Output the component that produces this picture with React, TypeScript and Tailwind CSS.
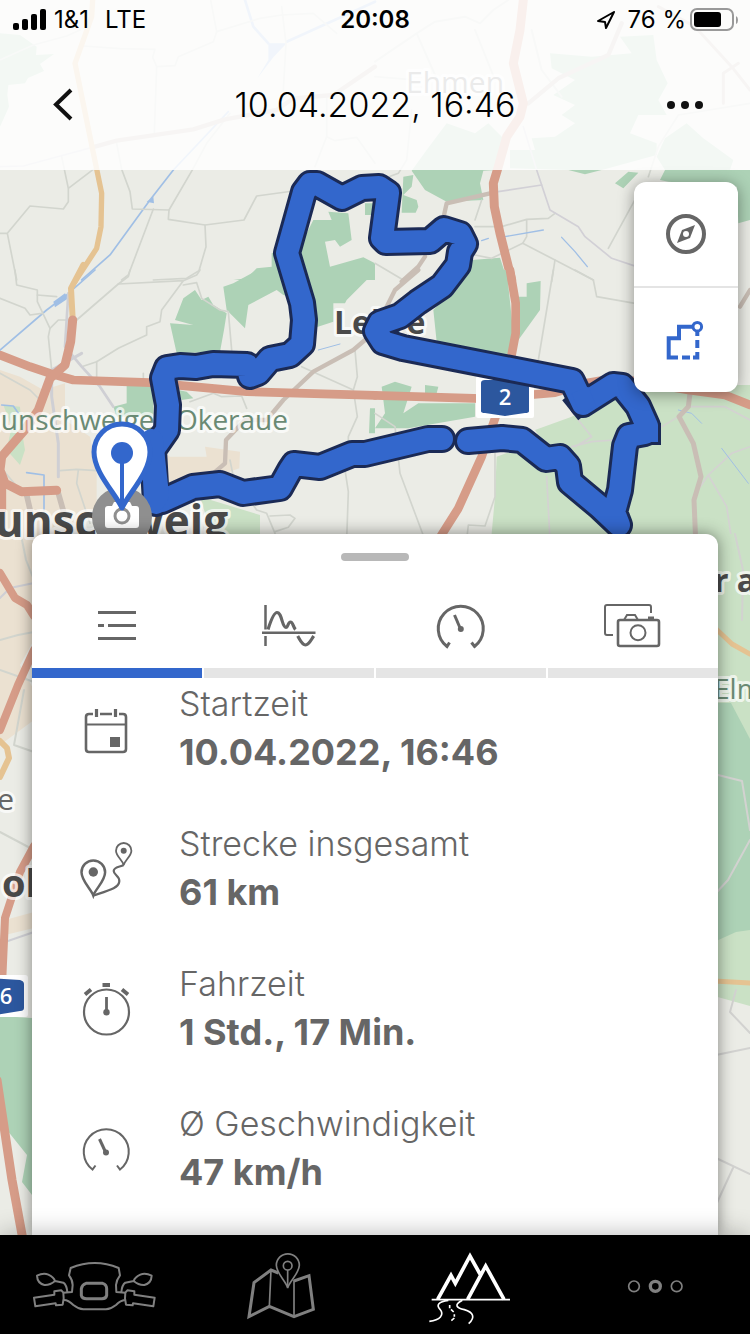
import type { ReactNode } from "react";

const FOREST = "#add2b6";
const MEADOW = "#cae1c5";
const TOWN = "#ebe1d1";
const HIGHWAY = "#d69c88";
const MAIN_ROAD = "#e5c392";
const SIDE_ROAD = "#c9beb5";
const LANE = "#d2d5ce";
const WATER = "#a0bfe5";

const ROUTE =
  "M156 503 L153 450 L167 430 L168 405 L163 378 L167 368 L180 366 L196 367 L213 364 L247 365 L250 376 L258 373 L270 359 L290 355 L302 344 L304 320 L302 303 L287 253 L304 192 L310 184 L317 184 L342 198 L362 188 L379 187 L388 193 L382 238 L386 242 L430 241 L444 229 L460 234 L465 244 L460 252 L458 265 L442 286 L418 302 L400 316 L380 323 L376 331 L383 342 L403 348 L572 381 L583 404 L613 385 L622 386 L638 406 L647 426 L645 433 L629 436 L625 446 L620 490 L614 512 L619 525 L600 507 L570 482 L568 466 L560 457 L546 459 L522 440 L502 438 L468 441";
const ROUTE_BACK =
  "M442 439 L428 439 L365 454 L352 454 L320 467 L294 464 L290 470 L280 488 L243 493 L220 484 L193 487 L162 501";

// Tiles are drawn at three units per screen pixel.
function Tile({ x, y, children }: { x: number; y: number; children: ReactNode }) {
  return (
    <g transform={`translate(${x} ${y}) scale(0.33333)`}>{children}</g>
  );
}

function Road({ d, color = LANE, width = 5 }: { d: string; color?: string; width?: number }) {
  return (
    <path
      d={d}
      fill="none"
      stroke={color}
      strokeWidth={width}
      strokeLinecap="round"
      strokeLinejoin="round"
    />
  );
}

function Label({
  x,
  y,
  className,
  end,
  children,
}: {
  x: number;
  y: number;
  className: string;
  end?: boolean;
  children: string;
}) {
  return (
    <text
      x={x}
      y={y}
      textAnchor={end ? "end" : "start"}
      stroke="#ffffff"
      strokeOpacity="0.7"
      strokeWidth="6"
      strokeLinejoin="round"
      paintOrder="stroke"
      className={`font-['Open_Sans',sans-serif] ${className}`}
    >
      {children}
    </text>
  );
}

function MapBackground() {
  return (
    <svg
      className="absolute inset-0 h-full w-full"
      viewBox="0 0 750 1334"
      preserveAspectRatio="xMidYMin slice"
      aria-hidden="true"
    >
      <rect width="750" height="1334" fill="#ebece6" />

      <Tile x={0} y={0}>
        <path
          fill={FOREST}
          d="M0 100 60 105 110 140 108 165 162 162 120 192 132 213 84 234 75 250 25 255 22 285 27 320 0 380Z"
        />
        <path
          fill={FOREST}
          d="M700 840 740 835 770 805 815 800 815 760 910 720 940 660 995 660 985 635 1045 640 1055 720 1020 740 1005 720 975 725 990 800 1090 772 1125 790V840Z M1095 610H1125V645H1095Z"
        />
        <path fill={WATER} d="M805 130H860L820 172 772 235 805 180Z M440 605 460 590 462 610Z" />
        <Road d="M735 0 760 80 805 130 M860 125 1125 5" color={WATER} width={8} />
        <Road d="M685 335 520 510 450 600 330 765 245 840" color={WATER} />
        <Road d="M0 700H22L90 618 190 627 205 605V565L280 508 M205 565 185 470 M22 700 50 840" />
        <Road d="M350 430 365 508 390 575 397 627 507 630 505 658 615 675 732 660 770 588 880 573" />
        <Road d="M690 340 620 430 578 508 507 630 M460 627 385 825 365 840 M615 675 618 740 597 812 560 835 460 840" />
        <Road d="M250 138 360 146 465 148 458 172 470 200 525 197 535 170 640 125 650 95 632 0 M470 200 463 400" />
        <Road d="M650 95 780 55 845 45 940 40 1010 100 M845 20 858 130 850 270" />
        <Road d="M0 180 100 135 200 108 240 90" />
        <Road d="M980 290V410L1005 422 1070 412 1125 490 M980 410 945 500" />
        <Road d="M0 500 70 498 285 440" color="#d2d3da" />
        <Road
          d="M285 440 350 422 580 388 675 358 830 330 880 295 1000 285 1125 200"
          color={SIDE_ROAD}
          width={13}
        />
        <Road
          d="M278 0 275 50 225 190 270 410 305 580 303 680 290 745 225 845"
          color={MAIN_ROAD}
          width={16}
        />
      </Tile>

      <Tile x={375} y={0}>
        <path
          fill={FOREST}
          d="M735 110 835 105 845 180 878 250 850 300 875 345H790L765 400 845 430V465L700 505 630 523 580 510 405 505V450H480L470 415 540 410 600 370 560 345 600 315 535 285 600 240 530 205 525 160 650 170 770 160Z"
        />
        <path
          fill={FOREST}
          d="M155 450 215 370 300 400 340 370 390 420 365 510 325 512 315 550 325 600 215 605 150 570 110 512Z"
        />
        <path fill={FOREST} d="M85 530 115 525 110 560 85 585 125 600 130 620 122 638H80Z" />
        <path
          fill={FOREST}
          d="M870 415 935 370 985 415 1075 480 1065 510H1125V660L1090 670 1085 560 880 545 855 540 870 510 845 470Z M720 550 760 515 790 518 745 565Z"
        />
        <path fill={FOREST} d="M290 780 375 773 400 850H200Z" />
        <Road
          d="M0 185 125 100 180 65 270 50 315 70 355 30 400 0 M125 100 200 270 M300 90 360 240 M470 90 500 210 560 290"
          width={6}
        />
        <Road d="M0 230 100 238 M110 330 95 480 70 520 30 535 M1125 310 910 345 850 440 820 530" />
        <Road d="M850 20 960 80 1070 200 1125 270 M1045 310V220L1090 190" color={SIDE_ROAD} width={9} />
        <Road d="M300 680 380 680 455 658 520 655 540 640 M455 658V710L443 730 540 780 655 840" />
        <Road d="M443 730 350 775 300 765 M540 780 530 845 M320 600 300 660 M700 745 785 590" />
        <Road d="M0 790 85 840" />
        <Road d="M370 575 500 555 485 510 445 380" color="#d2d0d6" />
        <Road d="M500 555 525 630 610 680 630 710 710 775 785 800" color="#d2d0d6" />
        <Road d="M205 655 215 610 345 580 M460 310 550 235 700 165 740 70" color={SIDE_ROAD} width={13} />
        <Road d="M150 770 130 800 80 845" color={SIDE_ROAD} width={13} />
        <Road d="M320 722 340 715 M390 710 505 690 M560 712 600 755 637 800" color={WATER} width={4} />
        <Road
          d="M445 0 435 90 415 190 445 310 435 350 395 410 370 500 355 550 358 620 375 700 410 840"
          color={HIGHWAY}
          width={27}
        />
      </Tile>

      <Tile x={0} y={270}>
        <path
          fill={TOWN}
          d="M0 300 60 320 130 360 195 340V450L270 500 290 600V720L200 810H0Z M480 540 510 560 620 560 615 530 720 545 718 595 660 615 500 645Z"
        />
        <path
          fill={MEADOW}
          d="M10 405 60 410 65 480 75 540 60 585 20 540 35 470Z M600 680 780 735V810H640Z"
        />
        <path
          fill={FOREST}
          d="M670 50 700 40 755 10 770 0H860L870 80 850 75 830 60 745 105 735 175 680 120Z"
        />
        <path
          fill={FOREST}
          d="M905 0H1120L1100 30 1040 90 1035 100H1000V155L940 175Z M550 85 585 60 605 90 625 80 640 105 680 130 672 180 660 245 530 250 510 160 580 165 525 150Z"
        />
        <path
          fill={FOREST}
          d="M380 348H460V440H350L340 410 380 400Z M535 360 560 365 580 385 545 390Z M1110 415H1125V490H1107Z"
        />
        <path fill={WATER} d="M160 95 195 70 205 85 165 112Z" />
        <Road d="M285 0 200 75 140 120 0 240" color={WATER} />
        <Road d="M80 608 132 615V720 M5 405 40 408 55 430" color={WATER} />
        <Road d="M45 0 50 45 112 60V95L150 175 145 200 155 300 M0 85 75 115 90 135 125 130" />
        <Road d="M112 75 170 80 M390 0 385 20 355 42 230 150 175 150 150 175" />
        <Road d="M355 42 550 32 590 15 600 0 M550 32 485 120 480 155 440 170V195L355 235 290 275 245 290" />
        <Road d="M550 45 590 38 605 85 660 120 685 125 695 240 M290 275V320 M430 330V310" />
        <Road d="M1065 240 1072 320 1060 360 M905 290 960 315 1060 360 1072 440 1045 500V530" />
        <Road d="M570 395 640 370 665 380 725 378 740 415 M0 590 60 660 M180 602 230 598 340 605" />
        <Road d="M235 600 230 640 270 760 M0 310 90 360 120 390 M1035 600 1045 665 1040 810" />
        <Road d="M690 570 700 620 770 720 800 730 825 790 M810 738 870 735 885 745 865 772 825 785" />
        <Road d="M205 70 195 230 245 290 300 350 340 410" color="#cfcfd4" width={8} />
        <Road d="M245 250 155 300 155 380 175 520V620" color="#cfcfd4" width={9} />
        <Road
          d="M1095 210 1060 240 940 305 850 390 800 450 735 450 678 510 675 580 640 610"
          color={SIDE_ROAD}
          width={13}
        />
        <Road d="M80 675 95 740 M175 670 195 740" color={SIDE_ROAD} width={17} />
        <Road d="M955 240 1020 222" color={WATER} width={3} />
        <Road d="M250 -15 213 55 218 145" color={MAIN_ROAD} width={18} />
        <Road
          d="M0 255 90 290 150 310 220 330 450 338 740 365 1125 376"
          color={HIGHWAY}
          width={26}
        />
        <Road
          d="M218 150 212 215 195 285 150 325 115 420 70 485 5 560 0 600 15 640 65 665 170 661 M5 640V810"
          color={HIGHWAY}
          width={27}
        />
      </Tile>

      <Tile x={375} y={270}>
        <path
          fill={MEADOW}
          d="M480 480 590 440 760 345H1125V1010H330L360 680 365 560 500 510Z"
        />
        <path
          fill={FOREST}
          d="M175 120 290 0H395L415 190 400 258 185 215Z M455 40 497 33 495 120 430 210 425 80H455Z"
        />
        <path
          fill={FOREST}
          d="M20 350 60 335 110 350 85 430 130 400H300V440L100 475H0L30 430Z M150 345 190 350 185 370H150Z"
        />
        <Road d="M0 430 60 470 75 610 150 810 M535 0 490 270 M600 0 655 30 665 80 780 100" />
        <Road d="M360 550V680L330 768 280 765 275 810 M910 440 860 470" />
        <Road
          d="M515 620 525 810 M590 530 650 515 720 510 M610 450 650 500 600 530 M950 410 1050 410 1125 450 M1125 530 1070 550 1000 615 1055 710 1070 810 M1000 615 955 680"
          color="#d4d2d2"
        />
        <Road d="M910 420 950 430 980 460 M1040 535 1120 640" color={WATER} width={3} />
        <Road d="M130 0 60 60 35 110 M1125 60 1095 110" color={SIDE_ROAD} width={13} />
        <Road
          d="M945 370 940 410 912 440 955 520 978 620 957 690 962 810"
          color={SIDE_ROAD}
          width={15}
        />
        <Road d="M405 0 422 100V190L405 280 M362 440 320 560 250 715 190 810" color={HIGHWAY} width={26} />
        <Road
          d="M0 376 320 386 M460 375 540 368 640 338 700 328 760 330 940 360 1050 375 1125 405"
          color={HIGHWAY}
          width={26}
        />
      </Tile>

      <path fill={TOWN} d="M0 530H34V640L20 665 34 690V720L0 745Z M5 920 34 912V928L5 935Z" />
      <path fill={FOREST} d="M0 1016 32 1018V1195L22 1182 27 1155 7 1130 0 1120Z" />
      <path fill={MEADOW} d="M714 534H750V1006L714 996Z" />
      <path fill={FOREST} d="M714 703H731L750 739V930L736 932 714 942Z" />
      <Road d="M20 530 26 560 34 580 M0 640 18 635 34 632 M0 670 34 682 M24 690 14 745 34 752 M0 832 34 850" width={2} />
      <Road d="M0 598 10 588 34 583 M5 942 34 932" color="#cfcfd4" width={2} />
      <Road
        d="M735 534 743 570 742 620 M718 775 742 781 750 830 M750 840 728 880 716 893 M736 990 730 1012 750 1033 M716 1055 750 1048 M716 1158 750 1174 M733 1168 716 1205"
        color="#d2d2d0"
        width={2}
      />
      <Road d="M0 741 7 748 9 758 0 777" color={MAIN_ROAD} width={6} />
      <Road d="M714 627 732 644 750 654 M714 981 750 983" color={MAIN_ROAD} width={5} />
      <Road d="M0 573 15 598 27 605 34 616 M34 650 18 685 0 730 M34 846 20 872 5 918 2 985" color={HIGHWAY} width={8} />
      <Road d="M-3 1080 12 1180 23 1240" color={HIGHWAY} width={9} />

      <Label x={406} y={93} className="fill-[#777777] text-[30px]">
        Ehmen
      </Label>
      <Label x={334} y={334} className="fill-[#4a4a4a] text-[32px] font-bold">
        Lehre
      </Label>
      <Label x={166} y={430} end className="fill-[#6a8a74] text-[28px]">
        Braunschweiger
      </Label>
      <Label x={288} y={430} end className="fill-[#6a8a74] text-[28px]">
        Okeraue
      </Label>
      <Label x={228} y={537} end className="fill-[#4a4a4a] text-[44px] font-bold">
        Braunschweig
      </Label>
      <Label x={714} y={592} className="fill-[#4a4a4a] text-[32px] font-bold">
        r am
      </Label>
      <Label x={714} y={699} className="fill-[#6a8a74] text-[28px]">
        Elm
      </Label>
      <Label x={14} y={810} end className="fill-[#666666] text-[30px]">
        e
      </Label>
      <Label x={2} y={897} className="fill-[#4a4a4a] text-[38px] font-bold">
        ol
      </Label>

      <rect x="476" y="376" width="58" height="42" rx="2" fill="#ffffff" />
      <path fill="#2c579e" d="M481 383q0-3 4-3h40q4 0 4 3v28q0 2-4 2l-20 3-20-3q-4 0-4-2Z" />
      <text x="505" y="405" textAnchor="middle" className="fill-white font-['Open_Sans',sans-serif] text-[22px] font-semibold">
        2
      </text>
      <rect x="-20" y="975" width="48" height="42" rx="3" fill="#ffffff" />
      <path fill="#2c579e" d="M-10 978 20 980q4 1 4 4v24q0 3-4 3L-10 1016Z" />
      <text x="6" y="1004" textAnchor="middle" className="fill-white font-['Open_Sans',sans-serif] text-[22px] font-semibold">
        6
      </text>

      <g fill="none" strokeLinecap="round" strokeLinejoin="round">
        <g stroke="#1b2a55" strokeWidth="28">
          <path d={ROUTE} />
          <path d={ROUTE_BACK} />
          <path d="M570 394 586 414" strokeLinecap="butt" strokeWidth="20" />
          <path d="M635 434H661" strokeWidth="22" strokeLinecap="butt" />
        </g>
        <g stroke="#3367cc" strokeWidth="22">
          <path d={ROUTE} />
          <path d={ROUTE_BACK} />
          <path d="M580 390 588 410" strokeWidth="18" strokeLinecap="butt" />
          <path d="M635 434H658" strokeWidth="16" strokeLinecap="butt" />
          <path d="M155 500 152 440 158 495" />
        </g>
      </g>

      <circle cx="122" cy="517" r="30" fill="#8f8f8f" />
      <path
        fill="#ffffff"
        d="M108 506h4l2-4h16l2 4h4q3 0 3 3v16q0 3-3 3h-28q-3 0-3-3v-16q0-3 3-3Z"
      />
      <circle cx="122" cy="516" r="7" fill="none" stroke="#8f8f8f" strokeWidth="3" />
      <path
        fill="#ffffff"
        stroke="#3367cc"
        strokeWidth="5"
        strokeLinejoin="round"
        d="M122 508C116 494 94 473 94 452a28 28 0 0 1 56 0C150 473 128 494 122 508Z"
      />
      <circle cx="122" cy="453" r="11" fill="#3367cc" />
      <path d="M122 455V508" stroke="#3367cc" strokeWidth="4" />
    </svg>
  );
}

function StatusBar() {
  return (
    <div className="grid h-10 grid-cols-3 items-center px-3 text-[24px] leading-10 text-black">
      <div className="flex items-center gap-2">
        <svg width="34" height="22" viewBox="0 0 34 22" aria-hidden="true">
          <rect x="1" y="14" width="6" height="7" rx="2" />
          <rect x="10" y="10" width="6" height="11" rx="2" />
          <rect x="19" y="5" width="6" height="16" rx="2" />
          <rect x="28" y="0" width="6" height="21" rx="2" />
        </svg>
        <span>1&amp;1</span>
        <span className="ml-2">LTE</span>
      </div>
      <div className="text-center font-semibold">20:08</div>
      <div className="flex items-center justify-end gap-1">
        <svg className="mr-2" width="20" height="20" viewBox="0 0 20 20" aria-hidden="true">
          <path
            d="M18 2 2 11 9 12 10 18Z"
            fill="none"
            stroke="#000000"
            strokeWidth="2"
            strokeLinejoin="round"
          />
        </svg>
        <span className="whitespace-nowrap">76 %</span>
        <svg width="48" height="24" viewBox="0 0 48 24" aria-hidden="true">
          <rect x="1" y="1" width="42" height="21" rx="6" fill="none" stroke="#999999" strokeWidth="2" />
          <rect x="4" y="4" width="27" height="15" rx="3" />
          <path d="M46 8q2 1 2 4t-2 4Z" fill="#999999" />
        </svg>
      </div>
    </div>
  );
}

function Header() {
  return (
    <header className="relative bg-white/85 pb-[26px]">
      <StatusBar />
      <div className="flex h-[104px] items-center justify-between px-10 pt-[26px]">
        <button type="button" aria-label="Zurück" className="flex size-12 items-center justify-center">
          <svg width="48" height="48" viewBox="0 0 48 48" fill="none" stroke="#111111" strokeWidth="4">
            <path d="M31 9 16 23.500 31 38" />
          </svg>
        </button>
        <h1 className="text-[34px] leading-[48px] font-light whitespace-nowrap text-black">
          10.04.2022, 16:46
        </h1>
        <button type="button" aria-label="Mehr" className="flex size-12 items-center justify-center">
          <svg width="48" height="48" viewBox="0 0 48 48" fill="#111111">
            <circle cx="9" cy="24" r="4" />
            <circle cx="23" cy="24" r="4" />
            <circle cx="37" cy="24" r="4" />
          </svg>
        </button>
      </div>
    </header>
  );
}

function MapTools() {
  return (
    <div className="relative mt-3 mr-3 flex flex-col divide-y-2 divide-[#e4e4e4] self-end rounded-xl bg-white shadow-[0_2px_16px_rgba(0,0,0,0.4)]">
      <button type="button" aria-label="Kompass" className="flex h-[106px] w-[104px] items-center justify-center">
        <svg width="48" height="48" viewBox="0 0 48 48">
          <circle cx="24" cy="24" r="18" fill="none" stroke="#666666" strokeWidth="4" />
          <path d="M33 15 28 28 15 33 20 20Z" fill="#666666" />
          <circle cx="24" cy="24" r="3" fill="#ffffff" />
        </svg>
      </button>
      <button type="button" aria-label="Route anzeigen" className="flex h-[104px] w-[104px] items-center justify-center">
        <svg width="48" height="48" viewBox="0 0 48 48" fill="none" stroke="#3367cc" strokeWidth="4">
          <path d="M31 10.700H17V22.300H6.700V41.500H16 M20 41.500H28 M31 41.500H35.300V36 M35.300 32V24 M35.300 20V15" />
          <circle cx="35.300" cy="10.700" r="4.300" strokeWidth="3" />
        </svg>
      </button>
    </div>
  );
}

function GaugeIcon({ strokeWidth }: { strokeWidth: number }) {
  return (
    <svg width="64" height="64" viewBox="0 0 64 64" fill="none" stroke="#666666" strokeWidth={strokeWidth}>
      <path d="M20.500 47.500 18 51.500A22.500 22.500 0 1 1 45.500 51.500L42.500 47.500" />
      <path d="M25.500 20 31.500 34" strokeWidth="3" />
      <circle cx="31.800" cy="34" r="3" fill="#666666" stroke="none" />
    </svg>
  );
}

const tabs = [
  {
    label: "Details",
    icon: (
      <svg width="64" height="64" viewBox="0 0 64 64" stroke="#666666" strokeWidth="3">
        <path d="M13 17.500H51M13 30.500H19M23 30.500H51M13 43.500H51" />
      </svg>
    ),
  },
  {
    label: "Diagramm",
    icon: (
      <svg width="64" height="64" viewBox="0 0 64 64" fill="none" stroke="#666666" strokeWidth="2.500">
        <path d="M8.500 10V34.500M8.500 41V51M5 37.700H58.500" />
        <path
          strokeWidth="3.200"
          d="M11 34.500C14 25 17 17.500 20 17.500 25 17.500 25 32.500 29 32.500 31 32.500 31 27 33.500 27 36 27 36 32 38.500 34.500M40.700 41C43 45 45 50 48.500 50 52 50 54 45 56.700 41"
        />
      </svg>
    ),
  },
  { label: "Geschwindigkeit", icon: <GaugeIcon strokeWidth={3} /> },
  {
    label: "Fotos",
    icon: (
      <svg width="64" height="64" viewBox="0 0 64 64" fill="none" stroke="#666666" strokeWidth="2">
        <path d="M12 40H6Q4 40 4 38V12Q4 10 6 10H48Q50 10 50 12V18" />
        <rect x="17" y="25" width="41" height="26" rx="2" strokeWidth="2.600" />
        <path d="M23 25 26 20H34L37 25" />
        <path d="M47 23H53" strokeWidth="3" />
        <circle cx="37" cy="37.700" r="7.500" />
      </svg>
    ),
  },
];

const details = [
  {
    label: "Startzeit",
    value: "10.04.2022, 16:46",
    icon: (
      <svg width="64" height="64" viewBox="0 0 64 64" fill="none" stroke="#666666" strokeWidth="2.600">
        <path d="M19 18H15Q12 18 12 21V53Q12 56 15 56H49Q52 56 52 53V21Q52 18 49 18H45M26 18H38" />
        <path d="M12 28.500H52" strokeWidth="2" />
        <path d="M22.500 13V21M41.500 13V21" strokeWidth="3.200" />
        <rect x="36" y="41" width="10" height="10" fill="#666666" stroke="none" />
      </svg>
    ),
  },
  {
    label: "Strecke insgesamt",
    value: "61 km",
    icon: (
      <svg width="64" height="64" viewBox="0 0 64 64" fill="none" stroke="#666666" strokeWidth="2.500">
        <path d="M19.300 59.500C17 53 7.500 45 7.500 36.200a11.800 11.800 0 0 1 23.600 0C31.100 45 21.500 53 19.300 59.500Z" />
        <circle cx="19.300" cy="36" r="4.700" fill="#666666" stroke="none" />
        <path
          strokeWidth="1.800"
          d="M49.700 29C48.500 24 42 20 42 14.700a7.700 7.700 0 0 1 15.400 0C57.400 20 51 24 49.700 29Z"
        />
        <circle cx="49.700" cy="14.700" r="3" fill="#666666" stroke="none" />
        <path
          strokeWidth="2.200"
          d="M49.700 29C46 31 39.500 31 39.700 35 39.700 39 46 40 45.300 45.500 44.500 52 36 54 19.300 59.500"
        />
      </svg>
    ),
  },
  {
    label: "Fahrzeit",
    value: "1 Std., 17 Min.",
    icon: (
      <svg width="64" height="64" viewBox="0 0 64 64" fill="none" stroke="#666666" strokeWidth="2.200">
        <circle cx="32.500" cy="36" r="22.500" />
        <path d="M28.500 9H36M11 18.500 17 13.500M48 13.500 54 18.500" strokeWidth="3.800" />
        <path d="M32.500 21V36" strokeWidth="2.800" />
        <circle cx="32.500" cy="36.300" r="3.200" fill="#666666" stroke="none" />
      </svg>
    ),
  },
  {
    label: "Ø Geschwindigkeit",
    value: "47 km/h",
    icon: (
      <svg width="64" height="64" viewBox="0 0 64 64" fill="none" stroke="#666666" strokeWidth="2">
        <path d="M21.500 49.500 18.500 53.500A22.500 22.500 0 1 1 46 53.500L43 49.500" />
        <path d="M25.500 23 31.500 36" strokeWidth="3" />
        <circle cx="32" cy="36.500" r="3" fill="#666666" stroke="none" />
      </svg>
    ),
  },
];

function TripSheet() {
  return (
    <section className="relative mx-8 mt-[142px] flex-1 rounded-t-xl bg-white pb-[38px] shadow-[0_0_16px_rgba(0,0,0,0.45)]">
      <div className="mx-auto h-[27px] w-[68px] pt-[19px]">
        <div className="h-2 rounded-full bg-[#b8b8b8]" />
      </div>
      <div role="tablist" className="mt-[34px] grid grid-cols-4 gap-[2px]">
        {tabs.map(({ label, icon }, index) => (
          <button
            key={label}
            type="button"
            role="tab"
            aria-label={label}
            aria-selected={index === 0}
            className={`flex h-[83px] justify-center border-b-10 ${
              index === 0 ? "border-[#3367cc]" : "border-[#e5e5e5]"
            }`}
          >
            {icon}
          </button>
        ))}
      </div>
      <dl className="flex flex-col gap-11 pt-[2px]">
        {details.map(({ label, value, icon }) => (
          <div key={label} className="grid grid-cols-[147px_1fr] items-center text-[#666666]">
            <div className="row-span-2 flex justify-center">{icon}</div>
            <dt className="text-[34px] leading-[48px] font-light">{label}</dt>
            <dd className="text-[36px] leading-[48px] font-bold">{value}</dd>
          </div>
        ))}
      </dl>
    </section>
  );
}

const navItems = [
  {
    label: "Fahrzeug",
    icon: (
      <svg width="128" height="80" viewBox="90 48 384 240" fill="none" stroke="#808080" strokeWidth="6" strokeLinejoin="round">
        <path d="M190 188 216 186 218 165Q218 150 207 136L212 114Q284 84 356 114L360 136Q349 150 348 165L349 186 376 188" />
        <path d="M165 153Q150 166 133 165 112 160 111 137 130 128 145 134 162 142 165 153L190 158Q200 165 202 186" />
        <path d="M401 153Q416 166 433 165 454 160 455 137 436 128 421 134 404 142 401 153L376 158Q366 165 364 186" />
        <path d="M102 203 163 194V184L184 181 190 188 191 205 188 224 168 226 167 220 106 229Z" />
        <path d="M464 203 403 194V184L382 181 376 188 375 205 378 224 398 226 399 220 460 229Z" />
        <path d="M192 210Q205 210 220 225 235 237 250 238H318Q333 237 348 225 362 211 375 210" />
        <path d="M258 160H308Q320 164 320 176V196Q318 206 306 206H260Q246 206 244 196V176Q246 164 258 160Z" strokeWidth="9" />
      </svg>
    ),
  },
  {
    label: "Karte",
    icon: (
      <svg width="80" height="80" viewBox="726 48 240 240" fill="none" stroke="#808080" strokeWidth="5">
        <path d="M838 129 816 120 765 158 750 260 811 229 885 260 943 238 930 137 885 153" strokeWidth="9" />
        <path d="M816 120 811 229M885 150V260" />
        <path d="M866 174C862 155 832 130 832 106a34 34 0 0 1 69 0C901 130 870 155 866 174Z" />
        <circle cx="866" cy="107" r="13" />
        <path d="M866 120V170" />
      </svg>
    ),
  },
  {
    label: "Touren",
    icon: (
      <svg width="96" height="80" viewBox="138 48 288 240" fill="none" stroke="#ffffff" strokeWidth="11">
        <path d="M188 208 228 136 241 160 285 78 315 132M278 208 332 108 387 208" />
        <path d="M170 209H405" strokeWidth="5" />
        <path
          strokeWidth="5"
          d="M220 211C190 215 183 225 195 238 209 255 195 270 163 274M262 211C235 225 245 234 268 239 295 247 302 262 281 281M224 225V235M228 238 236 246M238 253V260M238 264 229 272"
        />
      </svg>
    ),
  },
  {
    label: "Mehr",
    icon: (
      <svg width="80" height="80" viewBox="723 48 240 240" fill="none" stroke="#808080" strokeWidth="5">
        <circle cx="777" cy="169" r="16" />
        <circle cx="841" cy="169" r="15" strokeWidth="10" />
        <circle cx="905" cy="169" r="16" />
      </svg>
    ),
  },
];

function BottomNav() {
  return (
    <nav className="relative grid grid-cols-4 bg-black pt-[11px] pb-2 shadow-[0_0_24px_rgba(0,0,0,0.3)]">
      {navItems.map(({ label, icon }) => (
        <a key={label} href="#" aria-label={label} className="flex h-20 items-center justify-center">
          {icon}
        </a>
      ))}
    </nav>
  );
}

export default function App() {
  return (
    <main className="relative flex min-h-screen flex-col overflow-hidden font-['Inter',sans-serif]">
      <MapBackground />
      <Header />
      <MapTools />
      <TripSheet />
      <BottomNav />
    </main>
  );
}
